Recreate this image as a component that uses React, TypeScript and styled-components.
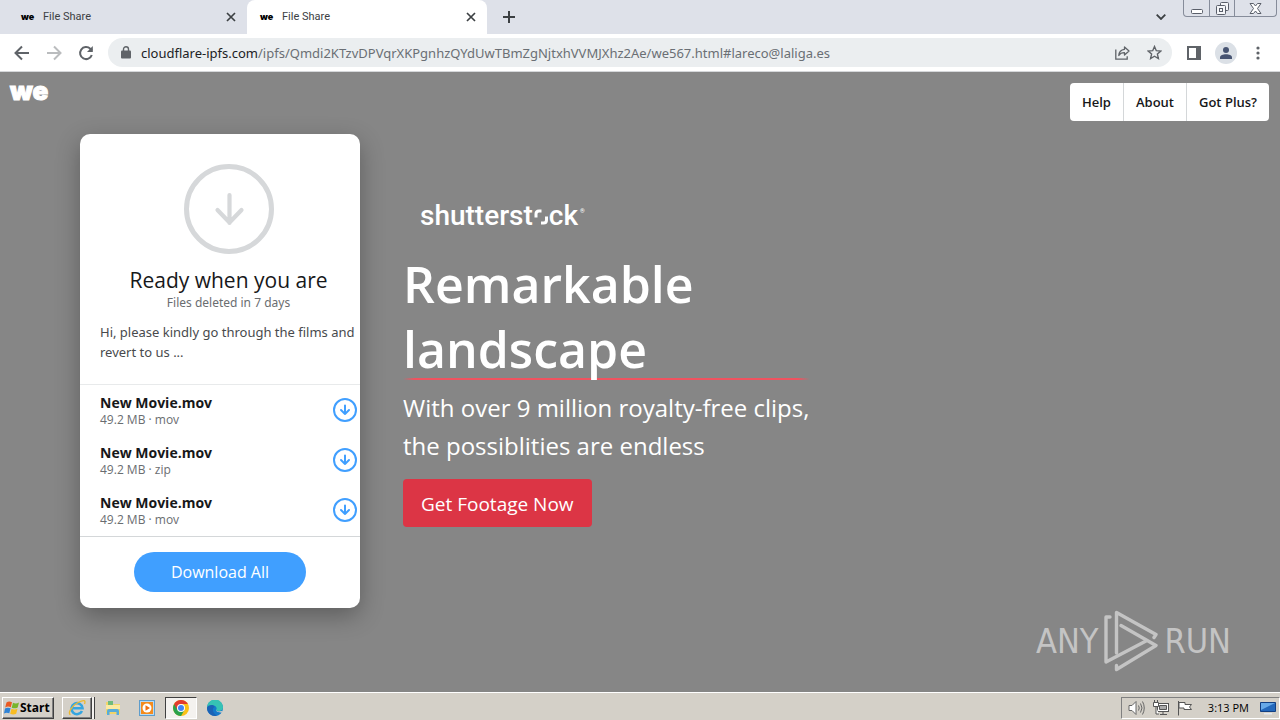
import React from "react";
import styled, { createGlobalStyle, css } from "styled-components";

const GlobalStyle = createGlobalStyle`
  * { box-sizing: border-box; }
  body { margin: 0; font-family: "Open Sans", "Noto Sans", sans-serif; color: #17181a; }
  button { font: inherit; color: inherit; padding: 0; border: 0; background: none; cursor: pointer; }
  h1, h2, p, ul { margin: 0; padding: 0; }
  svg { display: block; flex: none; }
`;

const Screen = styled.div`
  display: flex;
  flex-direction: column;
  min-height: 100vh;
  overflow: hidden;
`;

/* browser chrome */
const TabStrip = styled.div`
  display: flex;
  height: 34px;
  background: #dee1e9;
`;

const Tab = styled.div<{ $active?: boolean }>`
  display: flex;
  align-items: center;
  width: ${(p) => (p.$active ? 240 : 247)}px;
  padding: 0 10px 0 ${(p) => (p.$active ? 13 : 21)}px;
  border-radius: 8px 8px 0 0;
  background: ${(p) => (p.$active ? "#fff" : "transparent")};
  font: 11px/16px Roboto, sans-serif;
  color: #3c4043;
`;

const Favicon = styled.span`
  width: 22px;
  font: 900 9px/16px Inter, sans-serif;
  color: #000;
`;

const TabTitle = styled.span`
  flex: 1;
`;

const IconButton = styled.button<{ $w?: number }>`
  display: flex;
  align-items: center;
  justify-content: center;
  width: ${(p) => p.$w ?? 32}px;
  height: 28px;
`;

const TabClose = styled(IconButton)`
  width: 12px;
`;

const NewTab = styled(IconButton)`
  width: 44px;
  height: 34px;
`;

const StripEnd = styled.div`
  display: flex;
  align-items: flex-start;
  margin-left: auto;
  padding-right: 3px;
`;

const TabSearch = styled(IconButton)`
  height: 34px;
  width: 44px;
`;

const Caption = styled.div`
  display: flex;
  height: 17px;
  border: 1px solid #868c9a;
  border-top: 0;
  border-radius: 0 0 4px 4px;
`;

const CaptionButton = styled.button<{ $wide?: boolean }>`
  display: flex;
  align-items: center;
  justify-content: center;
  width: ${(p) => (p.$wide ? 42 : 25)}px;
  & + & { border-left: 1px solid #868c9a; }
`;

const Toolbar = styled.div`
  display: flex;
  align-items: center;
  height: 38px;
  padding: 0 6px;
  background: #fff;
  border-bottom: 1px solid #d5d7da;
`;

const Omnibox = styled.div`
  display: flex;
  align-items: center;
  flex: 1;
  min-width: 0;
  height: 29px;
  margin: 0 6px;
  padding: 0 2px 0 13px;
  border-radius: 15px;
  background: #ebeef0;
`;

const Address = styled.p`
  flex: 1;
  min-width: 0;
  margin-left: 10px;
  overflow: hidden;
  white-space: nowrap;
  font: 400 13px/20px "Noto Sans", sans-serif;
  color: #6a6f74;
  b { font-weight: 400; color: #202124; }
`;

const Avatar = styled.span`
  display: flex;
  align-items: center;
  justify-content: center;
  width: 22px;
  height: 22px;
  border-radius: 50%;
  background: #dbe0e6;
`;

/* page */
const Page = styled.main`
  position: relative;
  flex: 1;
  background: #868686;
`;

const Header = styled.header`
  display: flex;
  justify-content: space-between;
  height: 62px;
  padding: 11px 11px 0 10px;
`;

const Brand = styled.a`
  font: 900 26px/16px Inter, sans-serif;
  color: #fff;
  text-decoration: none;
  -webkit-text-stroke: 1px #fff;
`;

const Nav = styled.nav`
  display: flex;
  height: 38px;
  border-radius: 4px;
  background: #fff;
  overflow: hidden;
`;

const NavLink = styled.a`
  padding: 0 12px;
  font: 600 13px/38px "Open Sans", sans-serif;
  color: #17181a;
  text-decoration: none;
  & + & { border-left: 1px solid #d4d7d9; }
`;

const Content = styled.div`
  display: flex;
  align-items: flex-start;
  gap: 43px;
  padding: 0 80px 84px;
`;

const Card = styled.section`
  width: 280px;
  flex: none;
  border-radius: 10px;
  background: #fff;
  box-shadow: 0 8px 24px rgba(0, 0, 0, 0.3);
  font-family: "Noto Sans", sans-serif;
`;

const Intro = styled.div`
  display: flex;
  flex-direction: column;
  align-items: center;
  height: 251px;
  padding: 30px 3px 0 20px;
  border-bottom: 1px solid #e8eaeb;
`;

const CardTitle = styled.h2`
  margin-top: 12px;
  font: 400 21px/28px "Open Sans", sans-serif;
`;

const Expiry = styled.p`
  font-size: 12px;
  line-height: 18px;
  color: #6a6d70;
`;

const Message = styled.p`
  align-self: stretch;
  margin-top: 10px;
  margin-right: -3px;
  font-size: 13px;
  line-height: 20px;
  color: #484a4d;
`;

const FileList = styled.ul`
  list-style: none;
  border-bottom: 1px solid #d4d7d9;
  padding-bottom: 1px;
`;

const FileRow = styled.li`
  display: flex;
  align-items: center;
  justify-content: space-between;
  height: 50px;
  padding: 0 3px 0 20px;
`;

const FileInfo = styled.div`
  padding-top: 2px;
`;

const FileName = styled.p`
  font: 700 14px/18px "Open Sans", sans-serif;
`;

const FileMeta = styled.p`
  font: 12px/16px "Open Sans", sans-serif;
  color: #6a6d70;
`;

const CardFooter = styled.div`
  display: flex;
  justify-content: center;
  padding: 15px 0 16px;
`;

const DownloadAll = styled.button`
  width: 172px;
  height: 40px;
  border-radius: 20px;
  background: #409fff;
  color: #fff;
  font: 500 16px/24px "Open Sans", sans-serif;
`;

const Hero = styled.section`
  flex: 0 1 407px;
  padding-top: 64px;
  color: #fff;
`;

const Sponsor = styled.div`
  display: flex;
  align-items: baseline;
  height: 36px;
  margin: 0 0 18px 17px;
  font: 500 28px/36px Roboto, sans-serif;
  sup { margin-left: 2px; font-size: 6px; line-height: 26px; align-self: flex-start; }
`;

const HeroTitle = styled.h1`
  font: 600 50px/65px "Open Sans", sans-serif;
  background: linear-gradient(90deg, #f0525f00, #f0525f 3%, #f0525f 97%, #f0525f00) 0 calc(100% - 2px) / 100% 2px no-repeat;
`;

const HeroText = styled.p`
  margin-top: 7px;
  font-size: 24px;
  line-height: 38px;
`;

const HeroButton = styled.button`
  height: 48px;
  margin-top: 14px;
  padding: 2px 18px 0;
  border-radius: 4px;
  background: #dc3545;
  color: #fff;
  font-size: 19px;
`;

const Watermark = styled.div`
  position: absolute;
  right: 49px;
  bottom: 20px;
  display: flex;
  align-items: center;
  gap: 6px;
  font: 34px/62px "DejaVu Sans Condensed", sans-serif;
  color: #c4c4c4;
`;

/* taskbar */
const Taskbar = styled.footer`
  display: flex;
  align-items: center;
  height: 28px;
  padding: 2px 0 0 2px;
  background: #d4d0c8;
  border-top: 1px solid #fff;
`;

const raised = css`
  border: 1px solid;
  border-color: #fff #404040 #404040 #fff;
  box-shadow: inset -1px -1px #808080;
`;

const grouped = css`
  ${raised}
  width: 30px;
  margin-right: 5px;
  box-shadow: inset -1px -1px #808080, 2px 0 #f4f2ef, 3px 0 #404040;
`;

const sunken = css`
  border: 1px solid;
  border-color: #404040 #fff #fff #404040;
  background: #f4f2ef;
`;

const StartButton = styled.button`
  display: flex;
  align-items: center;
  width: 52px;
  height: 22px;
  padding-left: 1px;
  margin-right: 8px;
  font: 700 12px/18px "Open Sans", sans-serif;
  color: #000;
  ${raised}
`;

const TaskButton = styled.button<{ $look?: "grouped" | "sunken" }>`
  display: flex;
  align-items: center;
  justify-content: center;
  width: 32px;
  height: 22px;
  margin-right: 2px;
  ${(p) => (p.$look === "grouped" ? grouped : p.$look === "sunken" ? sunken : "")}
`;

const Tray = styled.div`
  display: flex;
  align-items: center;
  gap: 8px;
  height: 22px;
  margin-left: auto;
  padding: 0 3px 0 6px;
  border: 1px solid;
  border-color: #808080 #fff #fff #808080;
  font: 11px/18px "Open Sans", sans-serif;
  color: #000;
`;

const Clock = styled.time`
  margin: 0 3px 0 7px;
`;

function CloseIcon() {
  return (
    <svg width="10" height="10" viewBox="0 0 10 10" stroke="#3c4043" strokeWidth="1.700">
      <path d="M1 1l8 8M9 1L1 9" />
    </svg>
  );
}

function BigDownArrow() {
  return (
    <svg width="90" height="90" viewBox="0 0 90 90" fill="none" stroke="#d6d8da">
      <circle cx="45" cy="45" r="42.500" strokeWidth="5" />
      <path d="M45.500 31v28M33.500 46l12 12.500 12-12.500" strokeWidth="4.200" strokeLinecap="round" strokeLinejoin="round" />
    </svg>
  );
}

function DownArrow() {
  return (
    <svg width="24" height="24" viewBox="0 0 24 24" fill="none" stroke="#409fff" strokeWidth="2">
      <circle cx="12" cy="12" r="11" />
      <path d="M12 7.500v8.500M8 12l4 4 4-4" strokeLinecap="round" strokeLinejoin="round" />
    </svg>
  );
}

const BackIcon = ({ flip, color }: { flip?: boolean; color: string }) => (
  <svg width="16" height="16" viewBox="0 0 16 16" fill="none" stroke={color} strokeWidth="2">
    <path d={flip ? "M1 8h13M8 1.500L14.500 8 8 14.500" : "M15 8H2M8 1.500L1.500 8 8 14.500"} />
  </svg>
);

function RingMark() {
  return (
    <svg width="16" height="16" viewBox="0 0 16 16" fill="none" stroke="#fff" strokeWidth="3">
      <path d="M3 8.500V5Q3 2 6 2H8.500M13.500 7.500V11Q13.500 14 10.500 14H8" />
    </svg>
  );
}

function PlayMark() {
  return (
    <svg width="54" height="62" viewBox="0 0 54 62" fill="none" stroke="#c4c4c4" strokeWidth="3.400" strokeLinejoin="round" strokeLinecap="round">
      <path d="M6 7H2v45L42 31" />
      <path d="M12.500 43V2.500L52 24.500 50 27.500" />
      <path d="M17 15.500L52 35.500 12.500 59.500V55.500" />
    </svg>
  );
}

const files = [
  { name: "New Movie.mov", meta: "49.2 MB · mov" },
  { name: "New Movie.mov", meta: "49.2 MB · zip" },
  { name: "New Movie.mov", meta: "49.2 MB · mov" },
];

function BrowserTab({ active }: { active?: boolean }) {
  return (
    <Tab $active={active}>
      <Favicon>we</Favicon>
      <TabTitle>File Share</TabTitle>
      <TabClose aria-label="Close tab"><CloseIcon /></TabClose>
    </Tab>
  );
}

function BrowserChrome() {
  return (
    <>
      <TabStrip>
        <BrowserTab />
        <BrowserTab active />
        <NewTab aria-label="New tab">
          <svg width="12" height="12" viewBox="0 0 12 12" stroke="#3c4043" strokeWidth="2"><path d="M6 0v12M0 6h12" /></svg>
        </NewTab>
        <StripEnd>
          <TabSearch aria-label="Search tabs">
            <svg width="10" height="6" viewBox="0 0 10 6" fill="none" stroke="#3c4043" strokeWidth="1.800"><path d="M.7.7L5 5 9.300.7" /></svg>
          </TabSearch>
          <Caption>
            <CaptionButton aria-label="Minimize">
              <svg width="12" height="14" viewBox="0 0 12 14" fill="#fff" stroke="#5a5f6a"><rect x=".5" y="8.500" width="11" height="4" rx="1" /></svg>
            </CaptionButton>
            <CaptionButton aria-label="Restore">
              <svg width="13" height="13" viewBox="0 0 13 13" fill="#f4f5f8" stroke="#5a5f6a"><rect x="4.500" y=".5" width="8" height="8" rx="1" /><rect x=".5" y="3.500" width="9" height="9" rx="1" /><rect x="3.500" y="6.500" width="3" height="3" /></svg>
            </CaptionButton>
            <CaptionButton $wide aria-label="Close">
              <svg width="13" height="11" viewBox="0 0 13 11" fill="#fff" stroke="#5a5f6a"><path d="M1 .5h3.500l2 2.500 2-2.500H12L8.500 5.500l3.500 5H8.500l-2-2.500-2 2.500H1l3.500-5z" /></svg>
            </CaptionButton>
          </Caption>
        </StripEnd>
      </TabStrip>
      <Toolbar>
        <IconButton aria-label="Back"><BackIcon color="#5f6368" /></IconButton>
        <IconButton aria-label="Forward"><BackIcon flip color="#babcbe" /></IconButton>
        <IconButton aria-label="Reload">
          <svg width="16" height="16" viewBox="0 0 16 16" fill="none" stroke="#5f6368" strokeWidth="2"><path d="M13.800 10A6 6 0 1 1 12.300 3.800L14 5.500" /><path d="M14.800 1v6H9z" fill="#5f6368" stroke="none" /></svg>
        </IconButton>
        <Omnibox>
          <svg width="10" height="13" viewBox="0 0 10 13" fill="#5f6368"><rect y="4.500" width="10" height="8" rx="1" /><path d="M2.500 5V3.200a2.500 2.500 0 0 1 5 0V5" fill="none" stroke="#5f6368" strokeWidth="1.400" /></svg>
          <Address><b>cloudflare-ipfs.com</b>/ipfs/Qmdi2KTzvDPVqrXKPgnhzQYdUwTBmZgNjtxhVVMJXhz2Ae/we567.html#lareco@laliga.es</Address>
          <IconButton aria-label="Share">
            <svg width="15" height="14" viewBox="0 0 15 14" fill="none" stroke="#5f6368" strokeWidth="1.300"><path d="M.8 3.500v9.700h11.400v-3" /><path d="M9.500 1L14 5 9.500 9V6.700C7 6.700 5 7.500 3.800 9.500 4 6 6 3.700 9.500 3.300z" strokeLinejoin="round" /></svg>
          </IconButton>
          <IconButton aria-label="Bookmark">
            <svg width="15" height="15" viewBox="0 0 15 15" fill="none" stroke="#5f6368" strokeWidth="1.400"><path d="M7.500 1.500l1.800 4.200 4.500.4-3.400 3 1 4.400-3.900-2.300-3.900 2.300 1-4.400-3.400-3 4.500-.4z" /></svg>
          </IconButton>
        </Omnibox>
        <IconButton aria-label="Side panel">
          <svg width="14" height="14" viewBox="0 0 14 14"><rect x="1" y="1" width="12" height="12" fill="none" stroke="#5f6368" strokeWidth="2" /><path d="M9 0h5v14H9z" fill="#5f6368" /></svg>
        </IconButton>
        <IconButton aria-label="Profile">
          <Avatar><svg width="12" height="12" viewBox="0 0 12 12" fill="#475472"><circle cx="6" cy="3" r="3" /><path d="M0 12V10.500C0 8.500 3 7.300 6 7.300s6 1.200 6 3.200V12z" /></svg></Avatar>
        </IconButton>
        <IconButton aria-label="Menu">
          <svg width="4" height="14" viewBox="0 0 4 14" fill="#5f6368"><circle cx="2" cy="2" r="1.600" /><circle cx="2" cy="7" r="1.600" /><circle cx="2" cy="12" r="1.600" /></svg>
        </IconButton>
      </Toolbar>
    </>
  );
}

function DownloadCard() {
  return (
    <Card>
      <Intro>
        <BigDownArrow />
        <CardTitle>Ready when you are</CardTitle>
        <Expiry>Files deleted in 7 days</Expiry>
        <Message>Hi, please kindly go through the films and revert to us ...</Message>
      </Intro>
      <FileList>
        {files.map((file, i) => (
          <FileRow key={i}>
            <FileInfo>
              <FileName>{file.name}</FileName>
              <FileMeta>{file.meta}</FileMeta>
            </FileInfo>
            <IconButton $w={24} aria-label={`Download ${file.name}`}><DownArrow /></IconButton>
          </FileRow>
        ))}
      </FileList>
      <CardFooter><DownloadAll>Download All</DownloadAll></CardFooter>
    </Card>
  );
}

function WindowsTaskbar() {
  return (
    <Taskbar>
      <StartButton>
        <svg width="16" height="16" viewBox="0 0 16 16"><path d="M2.500 2.500Q5 .5 8 2.300L6.800 7.300Q4 5.800 1.200 7.500z" fill="#ea5a22" /><path d="M9 2.800q3 1.400 6-.3l-1.300 5q-3 1.600-6 .2z" fill="#78b52c" /><path d="M1 8.500q2.800-1.600 5.600-.2l-1.300 5Q2.500 12 0 13.500z" fill="#2f83d6" /><path d="M7.500 8.700q3 1.500 6 0l-1.300 5q-3 1.600-6 0z" fill="#f9bd22" /></svg>
        Start
      </StartButton>
      <TaskButton $look="grouped" aria-label="Internet Explorer">
        <svg width="18" height="18" viewBox="0 0 18 18" fill="none"><path d="M14 12A5.500 5.500 0 1 1 14.500 9.200H5" stroke="#35a5e0" strokeWidth="2.600" /><path d="M2.500 15.500C-1 15 4 6.500 10 3.500S18 1 16.500 5" stroke="#edb92e" strokeWidth="1.300" /></svg>
      </TaskButton>
      <TaskButton aria-label="File Explorer">
        <svg width="16" height="16" viewBox="0 0 16 16"><path d="M1 2h6l1 2h7v10H1z" fill="#f2d469" /><path d="M3 1h5v4H3z" fill="#70bb7b" /><path d="M1 5h14v4H1z" fill="#fbeaa2" /><path d="M2 15v-4q0-2 2-2h8q2 0 2 2v4h-2.500v-3h-7v3z" fill="#58acd9" /></svg>
      </TaskButton>
      <TaskButton aria-label="Media Player">
        <svg width="16" height="16" viewBox="0 0 16 16"><rect x=".5" y=".5" width="15" height="15" fill="#b8daf2" stroke="#5e9dcc" /><rect x="2" y="2" width="12" height="12" fill="#f48b1d" /><circle cx="8" cy="8" r="4.500" fill="#fff" /><path d="M6.500 5.200L11 8 6.500 10.800z" fill="#ef7012" /></svg>
      </TaskButton>
      <TaskButton $look="sunken" aria-label="Chrome">
        <svg width="16" height="16" viewBox="0 0 16 16"><circle cx="8" cy="8" r="8" fill="#fbc116" /><path d="M8 8L1.100 4A8 8 0 0 0 8 16l3.500-6z" fill="#2ba24c" /><path d="M8 4h6.900A8 8 0 0 0 1.100 4L4.500 10z" fill="#e33b2e" /><circle cx="8" cy="8" r="4" fill="#fff" /><circle cx="8" cy="8" r="3" fill="#4285f4" /></svg>
      </TaskButton>
      <TaskButton aria-label="Edge">
        <svg width="16" height="16" viewBox="0 0 16 16"><circle cx="8" cy="8" r="8" fill="#1479cb" /><path d="M0 8A8 8 0 0 1 16 7c0 3-2 4-4.500 4S9 9.800 9.500 9 9 5.500 6 5.500 0 7 0 8z" fill="#36c2b4" /><path d="M0 8c0-3 7-4.500 7.500-1C5 8 5 13 10 15.700A8 8 0 0 1 0 8z" fill="#1b62b5" /><path d="M9.300 9.500C9 11 11 12 14.500 11L16 12l-1 .5c-4 0-6.500-1-5.700-3z" fill="#d4d0c8" /></svg>
      </TaskButton>
      <Tray>
        <svg width="17" height="16" viewBox="0 0 17 16" fill="#fff" stroke="#666"><path d="M1 5.500h3l4-4v13l-4-4H1z" /><path d="M10.500 5.500q1.500 2.500 0 5M12.500 3.500q3 4.500 0 9M14.500 1.500q3.500 6.500 0 13" fill="none" /></svg>
        <svg width="16" height="16" viewBox="0 0 16 16" fill="#fff" stroke="#555"><rect x="4.500" y="3.500" width="11" height="8" /><path d="M6.500 5.500h7v4h-7zM7 14.500h7M10 12v2" fill="#aaa" /><path d="M.5 2.500h5v4h-5zM1.500 0v2M4.500 0v2M3 7v7h3" /></svg>
        <svg width="16" height="16" viewBox="0 0 16 16" fill="#fff" stroke="#555"><path d="M1.500 1v14.500M2 2.500h6v2h6.500l-2 2.500 2 2.500H7v-1.500H2z" /></svg>
        <Clock>3:13 PM</Clock>
        <svg width="16" height="14" viewBox="0 0 16 14"><path d="M.5 1.500h15v9H.5z" fill="#2468bb" stroke="#123f83" /><path d="M1 2h14L1 9z" fill="#67a9e8" /><path d="M4 12h8v1.500H4z" fill="#e5e9ee" /></svg>
      </Tray>
    </Taskbar>
  );
}

export default function App() {
  return (
    <Screen>
      <GlobalStyle />
      <BrowserChrome />
      <Page>
        <Header>
          <Brand href="#">we</Brand>
          <Nav>
            <NavLink href="#">Help</NavLink>
            <NavLink href="#">About</NavLink>
            <NavLink href="#">Got Plus?</NavLink>
          </Nav>
        </Header>
        <Content>
          <DownloadCard />
          <Hero>
            <Sponsor>shutterst<RingMark />ck<sup>®</sup></Sponsor>
            <HeroTitle>Remarkable landscape</HeroTitle>
            <HeroText>With over 9 million royalty-free clips, the possiblities are endless</HeroText>
            <HeroButton>Get Footage Now</HeroButton>
          </Hero>
        </Content>
        <Watermark><span>ANY</span><PlayMark /><span>RUN</span></Watermark>
      </Page>
      <WindowsTaskbar />
    </Screen>
  );
}
